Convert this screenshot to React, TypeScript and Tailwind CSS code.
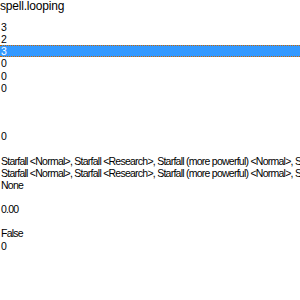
const rows: { v: string; sel?: boolean }[] = [
  { v: "3" },
  { v: "2" },
  { v: "3", sel: true },
  { v: "0" },
  { v: "0" },
  { v: "0" },
  { v: "" },
  { v: "" },
  { v: "" },
  { v: "0" },
  { v: "" },
  { v: "Starfall <Normal>, Starfall <Research>, Starfall (more powerful) <Normal>, Starfall (more powerful) <Research>" },
  { v: "Starfall <Normal>, Starfall <Research>, Starfall (more powerful) <Normal>, Starfall (more powerful) <Research>" },
  { v: "None" },
  { v: "" },
  { v: "0.00" },
  { v: "" },
  { v: "False" },
  { v: "0" },
];

export default function App() {
  return (
    <div className="w-[300px] h-[300px] bg-white overflow-hidden text-black font-['Liberation_Sans',Arial,sans-serif]">
      <div className="h-[21px] leading-[12px] text-[12px] tracking-[-0.2px]">spell.looping</div>
      <div className="text-[10.5px] tracking-[-0.75px]">
        {rows.map((r, i) =>
          r.sel ? (
            <div
              key={i}
              className="h-[12.15px] leading-[10.15px] bg-[#3399ff] text-white border-y border-dotted border-[#cc6600] pl-px whitespace-nowrap overflow-hidden"
            >
              {r.v}
            </div>
          ) : (
            <div key={i} className="h-[12.15px] leading-[12.15px] pl-px whitespace-nowrap overflow-hidden">
              {r.v}
            </div>
          )
        )}
      </div>
    </div>
  );
}
